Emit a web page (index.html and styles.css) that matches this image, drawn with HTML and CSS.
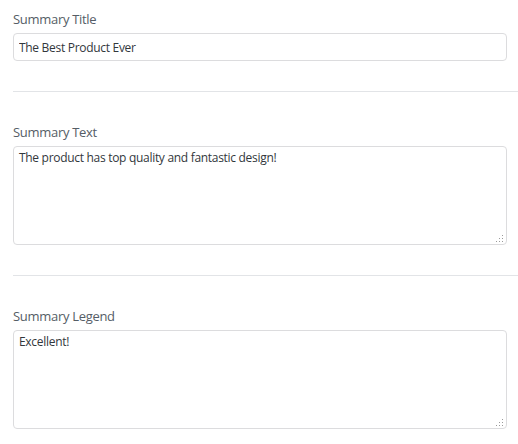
FILE: index.html
```html
<!DOCTYPE html>
<html lang="en">
<head>
<meta charset="utf-8">
<title>Summary</title>
<link rel="stylesheet" href="styles.css">
</head>
<body>
<form class="form">
  <div class="field">
    <label class="label" for="title">Summary Title</label>
    <input class="input" id="title" type="text" value="The Best Product Ever">
  </div>
  <hr class="sep">
  <div class="field">
    <label class="label" for="text">Summary Text</label>
    <div class="area-wrap">
      <textarea class="area" id="text">The product has top quality and fantastic design!</textarea>
      <svg class="grip" width="7" height="7" viewBox="0 0 7 7"><rect x="6" y="0" width="1" height="1"/><rect x="3" y="3" width="1" height="1"/><rect x="6" y="3" width="1" height="1"/><rect x="0" y="6" width="1" height="1"/><rect x="3" y="6" width="1" height="1"/><rect x="6" y="6" width="1" height="1"/></svg>
    </div>
  </div>
  <hr class="sep">
  <div class="field">
    <label class="label" for="legend">Summary Legend</label>
    <div class="area-wrap">
      <textarea class="area" id="legend">Excellent!</textarea>
      <svg class="grip" width="7" height="7" viewBox="0 0 7 7"><rect x="6" y="0" width="1" height="1"/><rect x="3" y="3" width="1" height="1"/><rect x="6" y="3" width="1" height="1"/><rect x="0" y="6" width="1" height="1"/><rect x="3" y="6" width="1" height="1"/><rect x="6" y="6" width="1" height="1"/></svg>
    </div>
  </div>
</form>
</body>
</html>
```
FILE: styles.css
```css
html, body {
  margin: 0;
  padding: 0;
  background: #fff;
}
body {
  font-family: "Open Sans", "Noto Sans", sans-serif;
  font-size: 13px;
}
.form {
  padding: 9px 0 0 13px;
}
.field {
  display: flex;
  flex-direction: column;
  gap: 4px;
  padding-right: 11px;
}
.label {
  display: block;
  font-size: 13px;
  letter-spacing: -0.3px;
  line-height: 20px;
  color: #555d66;
}
.input {
  box-sizing: border-box;
  width: 100%;
  height: 28px;
  margin: 0;
  padding: 0 5px;
  border: 1px solid #dcdcde;
  border-radius: 4px;
  font-family: inherit;
  font-size: 12px;
  letter-spacing: -0.3px;
  color: #32373c;
  background: #fff;
  outline: none;
}
.area-wrap {
  position: relative;
}
.area {
  display: block;
  box-sizing: border-box;
  width: 100%;
  height: 99px;
  margin: 0;
  padding: 2px 5px;
  border: 1px solid #dcdcde;
  border-radius: 4px;
  font-family: inherit;
  font-size: 12px;
  letter-spacing: -0.3px;
  line-height: 18px;
  color: #32373c;
  background: #fff;
  resize: none;
  outline: none;
}
.grip {
  position: absolute;
  right: 4px;
  bottom: 3px;
  fill: #9a9a9a;
}
.sep {
  margin: 30px 0 30px 0;
  border: 0;
  border-top: 1px solid #e2e4e7;
  height: 0;
}
```
